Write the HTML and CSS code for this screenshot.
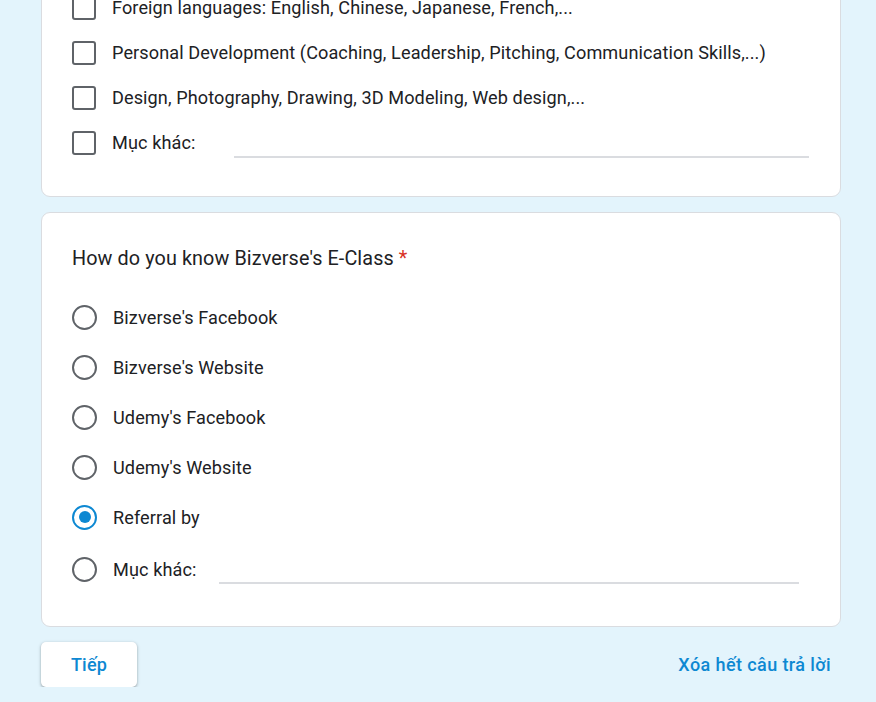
FILE: index.html
```html
<!DOCTYPE html>
<html lang="vi">
<head>
<meta charset="utf-8">
<link rel="stylesheet" href="styles.css">
</head>
<body>
<div class="page">
  <div class="card card-first">
    <div class="options">
      <div class="row"><span class="checkbox"></span><span class="label">Foreign languages: English, Chinese, Japanese, French,...</span></div>
      <div class="row"><span class="checkbox"></span><span class="label">Personal Development (Coaching, Leadership, Pitching, Communication Skills,...)</span></div>
      <div class="row"><span class="checkbox"></span><span class="label">Design, Photography, Drawing, 3D Modeling, Web design,...</span></div>
      <div class="row"><span class="checkbox"></span><span class="label">Mục khác:</span><span class="other-line other-line-cb"></span></div>
    </div>
  </div>

  <div class="card card-second">
    <div class="question">How do you know Bizverse's E-Class <span class="req">*</span></div>
    <div class="options radios">
      <div class="row rrow"><span class="radio"></span><span class="label">Bizverse's Facebook</span></div>
      <div class="row rrow"><span class="radio"></span><span class="label">Bizverse's Website</span></div>
      <div class="row rrow"><span class="radio"></span><span class="label">Udemy's Facebook</span></div>
      <div class="row rrow"><span class="radio"></span><span class="label">Udemy's Website</span></div>
      <div class="row rrow"><span class="radio checked"></span><span class="label">Referral by</span></div>
      <div class="row rrow rlast"><span class="radio"></span><span class="label">Mục khác:</span><span class="other-line other-line-r"></span></div>
    </div>
  </div>

  <div class="footer">
    <button class="next">Tiếp</button>
    <a class="clear">Xóa hết câu trả lời</a>
  </div>
</div>
</body>
</html>
```
FILE: styles.css
```css
html, body {
  margin: 0;
  padding: 0;
  background: #e3f4fc;
  font-family: Roboto, "Noto Sans", Arial, sans-serif;
  color: #202124;
  overflow: hidden;
}
.page {
  margin-left: 41px;
  width: 800px;
}
.card {
  background: #fff;
  border: 1px solid #dadce0;
  border-radius: 9px;
  box-sizing: border-box;
}
.card-first {
  margin-top: -40px;
  padding: 24px 30px 31px 30px;
}
.card-second {
  margin-top: 15px;
  padding: 34px 30px 32px 30px;
}
.options {
  display: flex;
  flex-direction: column;
}
.row {
  display: flex;
  align-items: center;
  height: 45px;
}
.rrow { height: 50px; }
.rlast { margin-top: 2px; }
.label {
  font-size: 18.1px;
  letter-spacing: 0.1px;
  margin-left: 16px;
  white-space: nowrap;
}
.checkbox {
  width: 24px;
  height: 24px;
  box-sizing: border-box;
  border: 2.5px solid #5f6368;
  border-radius: 3px;
  flex: none;
}
.radio {
  width: 25px;
  height: 25px;
  box-sizing: border-box;
  border: 2.5px solid #5f6368;
  border-radius: 50%;
  flex: none;
  display: flex;
  align-items: center;
  justify-content: center;
}
.radio.checked {
  border-color: #0d88d2;
}
.radio.checked::after {
  content: "";
  width: 12px;
  height: 12px;
  border-radius: 50%;
  background: #0d88d2;
}
.other-line {
  align-self: center;
  height: 1px;
  background: #dadce0;
  border-bottom: 1px solid #dadce0;
  margin-top: 28px;
}
.other-line-cb {
  margin-left: 39px;
  width: 575px;
}
.other-line-r {
  margin-left: 23px;
  width: 580px;
}
.question {
  font-size: 19.8px;
  line-height: 24px;
  letter-spacing: 0.1px;
  margin-bottom: 21px;
}
.req { color: #d93025; }
.footer {
  display: flex;
  justify-content: space-between;
  align-items: center;
  margin-top: 15px;
}
.next {
  width: 96px;
  height: 45px;
  background: #fff;
  border: none;
  border-radius: 5px;
  box-shadow: 0 1px 2px rgba(60,64,67,0.3), 0 1px 3px 1px rgba(60,64,67,0.15);
  color: #0d88d2;
  font-family: Roboto, sans-serif;
  font-size: 18px;
  font-weight: 500;
  letter-spacing: 0.2px;
  padding: 0;
}
.clear {
  color: #0d88d2;
  font-family: Roboto, sans-serif;
  font-size: 18px;
  font-weight: 500;
  letter-spacing: 0.4px;
  margin-right: 10px;
}
```
